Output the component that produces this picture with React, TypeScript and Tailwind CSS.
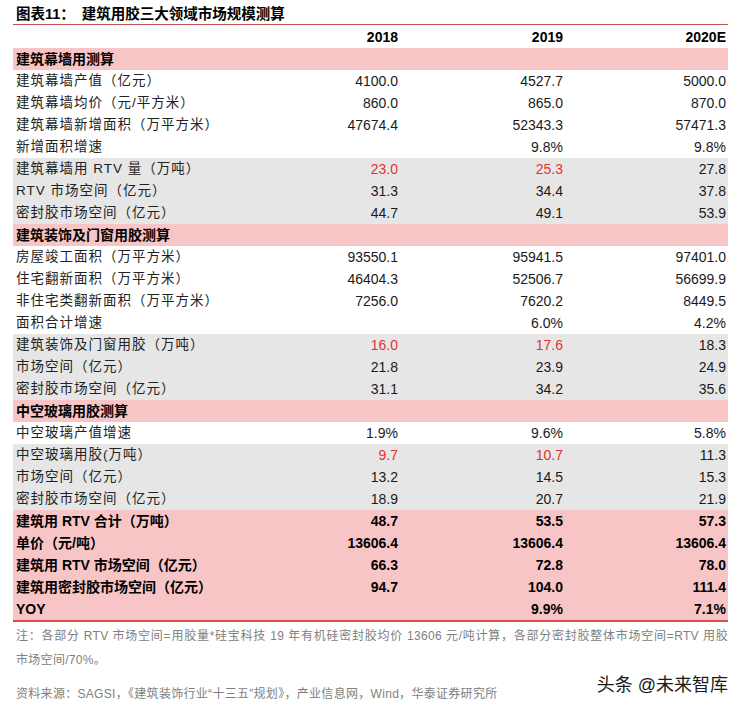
import React from "react";

type Row = {
  label: string;
  v?: [string, string, string];
  kind: "section" | "white" | "gray" | "total";
  red?: [boolean, boolean, boolean];
};

const rows: Row[] = [
  { label: "建筑幕墙用测算", kind: "section" },
  { label: "建筑幕墙产值（亿元）", v: ["4100.0", "4527.7", "5000.0"], kind: "white" },
  { label: "建筑幕墙均价（元/平方米）", v: ["860.0", "865.0", "870.0"], kind: "white" },
  { label: "建筑幕墙新增面积（万平方米）", v: ["47674.4", "52343.3", "57471.3"], kind: "white" },
  { label: "新增面积增速", v: ["", "9.8%", "9.8%"], kind: "white" },
  { label: "建筑幕墙用 RTV 量（万吨）", v: ["23.0", "25.3", "27.8"], kind: "gray", red: [true, true, false] },
  { label: "RTV 市场空间（亿元）", v: ["31.3", "34.4", "37.8"], kind: "gray" },
  { label: "密封胶市场空间（亿元）", v: ["44.7", "49.1", "53.9"], kind: "gray" },
  { label: "建筑装饰及门窗用胶测算", kind: "section" },
  { label: "房屋竣工面积（万平方米）", v: ["93550.1", "95941.5", "97401.0"], kind: "white" },
  { label: "住宅翻新面积（万平方米）", v: ["46404.3", "52506.7", "56699.9"], kind: "white" },
  { label: "非住宅类翻新面积（万平方米）", v: ["7256.0", "7620.2", "8449.5"], kind: "white" },
  { label: "面积合计增速", v: ["", "6.0%", "4.2%"], kind: "white" },
  { label: "建筑装饰及门窗用胶（万吨）", v: ["16.0", "17.6", "18.3"], kind: "gray", red: [true, true, false] },
  { label: "市场空间（亿元）", v: ["21.8", "23.9", "24.9"], kind: "gray" },
  { label: "密封胶市场空间（亿元）", v: ["31.1", "34.2", "35.6"], kind: "gray" },
  { label: "中空玻璃用胶测算", kind: "section" },
  { label: "中空玻璃产值增速", v: ["1.9%", "9.6%", "5.8%"], kind: "white" },
  { label: "中空玻璃用胶(万吨）", v: ["9.7", "10.7", "11.3"], kind: "gray", red: [true, true, false] },
  { label: "市场空间（亿元）", v: ["13.2", "14.5", "15.3"], kind: "gray" },
  { label: "密封胶市场空间（亿元）", v: ["18.9", "20.7", "21.9"], kind: "gray" },
  { label: "建筑用 RTV 合计（万吨）", v: ["48.7", "53.5", "57.3"], kind: "total" },
  { label: "单价（元/吨）", v: ["13606.4", "13606.4", "13606.4"], kind: "total" },
  { label: "建筑用 RTV 市场空间（亿元）", v: ["66.3", "72.8", "78.0"], kind: "total" },
  { label: "建筑用密封胶市场空间（亿元）", v: ["94.7", "104.0", "111.4"], kind: "total" },
  { label: "YOY", v: ["", "9.9%", "7.1%"], kind: "total" },
];

const FONT = { fontFamily: '"Liberation Sans", "Noto Sans CJK SC", sans-serif' };

function TableRow({ r, last }: { r: Row; last: boolean }) {
  const bg =
    r.kind === "section" || r.kind === "total"
      ? "bg-[#f8c5c7]"
      : r.kind === "gray"
      ? "bg-[#e6e6e6]"
      : "bg-white";
  const bold = r.kind === "section" || r.kind === "total";
  return (
    <div
      className={`grid grid-cols-[222px_165px_165px_163px] h-[22px] items-center ${bg} ${
        last ? "border-b-2 border-[#dc4b47] h-[24px]" : ""
      }`}
    >
      <div
        className={`pl-[3px] whitespace-nowrap ${
          bold ? "font-bold text-[14px] text-black" : "text-[13.5px] text-[#222] tracking-[1px]"
        }`}
      >
        {r.label}
      </div>
      {[0, 1, 2].map((i) => (
        <div
          key={i}
          className={`pr-[2px] text-right text-[14px] ${bold ? "font-bold text-black" : ""} ${
            r.red && r.red[i] ? "text-[#e8302e]" : bold ? "" : "text-[#1a1a1a]"
          }`}
        >
          {r.v ? r.v[i] : ""}
        </div>
      ))}
    </div>
  );
}

export default function App() {
  return (
    <div className="w-[745px] h-[708px] bg-white pl-[13px] pr-[17px] overflow-hidden" style={FONT}>
      <div className="h-[25px] pt-[4px] pl-[3px] border-b border-[#c0504d] text-[14.5px] font-bold text-black whitespace-nowrap leading-[20px]">
        <span>图表11：</span>
        <span className="ml-[7px]">建筑用胶三大领域市场规模测算</span>
      </div>
      <div className="grid grid-cols-[222px_165px_165px_163px] h-[23px] pt-[2px] items-center font-bold text-[14px] text-black">
        <div></div>
        <div className="pr-[2px] text-right">2018</div>
        <div className="pr-[2px] text-right">2019</div>
        <div className="pr-[2px] text-right">2020E</div>
      </div>
      <div className="flex flex-col">
        {rows.map((r, i) => (
          <TableRow key={i} r={r} last={i === rows.length - 1} />
        ))}
      </div>
      <div className="mt-[2px] pl-[3px] text-[12px] text-[#808080] leading-[24px] tracking-[0.3px]">
        <div className="text-justify [text-align-last:justify] whitespace-nowrap">
          注：各部分 RTV 市场空间=用胶量*硅宝科技 19 年有机硅密封胶均价 13606 元/吨计算，各部分密封胶整体市场空间=RTV 用胶
        </div>
        <div>市场空间/70%。</div>
        <div className="flex items-end justify-between mt-[1px]">
          <div>资料来源：SAGSI，《建筑装饰行业“十三五”规划》，产业信息网，Wind，华泰证券研究所</div>
          <div
            className="text-[18px] text-[#1a1a1a] leading-[24px] mb-[9px] tracking-[0px]"
            style={{ textShadow: "0 0 2px #fff" }}
          >
            头条 @未来智库
          </div>
        </div>
      </div>
    </div>
  );
}
